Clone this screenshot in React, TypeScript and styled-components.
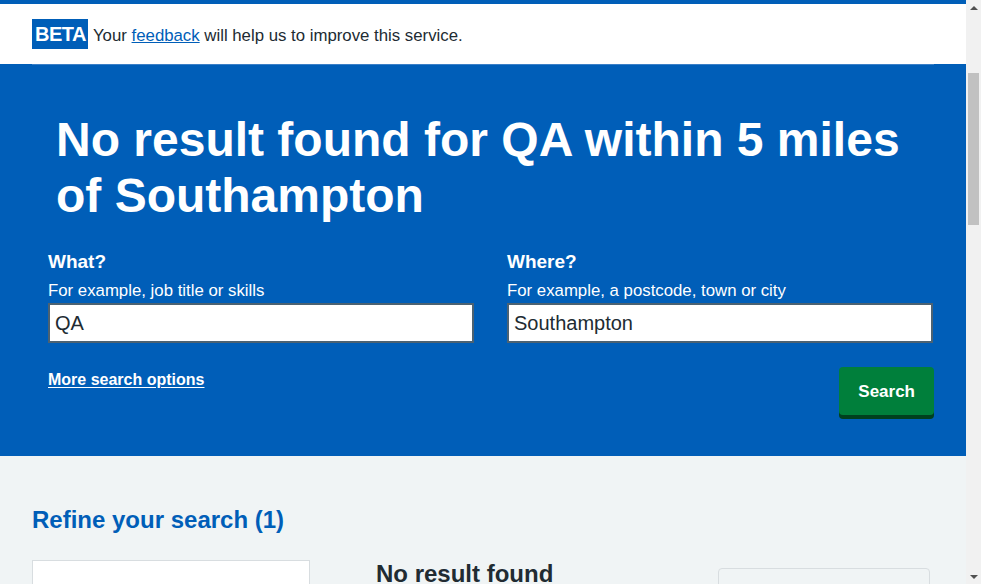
import styled, { createGlobalStyle } from 'styled-components'

const GlobalStyle = createGlobalStyle`
	html, body {
		margin: 0;
		padding: 0;
		height: 100%;
		overflow: hidden;
	}
	body {
		font-family: 'Liberation Sans', Arial, sans-serif;
		color: #212b32;
		background: #f0f4f5;
	}
	* {
		box-sizing: border-box;
	}
`

const Frame = styled.div`
	display: flex;
	height: 100vh;
`

const Page = styled.div`
	flex: 1;
	min-width: 0;
	overflow: hidden;
	border-top: 4px solid #005eb8;
`

const Banner = styled.div`
	display: flex;
	align-items: center;
	height: 60px;
	padding: 0 32px;
	background: #ffffff;
	gap: 5px;
`

const BetaTag = styled.strong`
	display: inline-block;
	height: 30px;
	padding: 0 2px 0 3px;
	background: #005eb8;
	color: #ffffff;
	font-size: 20px;
	line-height: 31px;
	letter-spacing: -0.5px;
`

const BannerText = styled.p`
	margin: 3px 0 0;
	font-size: 16.8px;
	line-height: 24px;
	color: #212b32;

	& a {
		color: #005eb8;
		text-decoration: underline;
	}
`

const Hero = styled.section`
	background: #005eb8;
	padding-bottom: 41px;
`

const HeroInner = styled.div`
	margin: 0 32px;
	border-top: 1px solid #3a7fc7;
	padding-top: 47px;
`

const Heading = styled.h1`
	margin: 0 0 26px;
	padding: 0 24px;
	font-size: 48px;
	line-height: 56px;
	font-weight: 700;
	color: #ffffff;
`

const SearchForm = styled.form`
	padding-left: 16px;
`

const Fields = styled.div`
	display: grid;
	grid-template-columns: 426px 426px;
	column-gap: 33px;
`

const Field = styled.div`
	display: flex;
	flex-direction: column;
`

const Label = styled.label`
	font-size: 19px;
	line-height: 24px;
	font-weight: 700;
	color: #ffffff;
	margin-bottom: 5px;
`

const Hint = styled.span`
	font-size: 16.8px;
	line-height: 24px;
	color: #ffffff;
`

const TextInput = styled.input`
	height: 40px;
	width: 100%;
	border: 2px solid #4c6272;
	padding: 0 5px;
	background: #ffffff;
	font-family: 'Liberation Sans', Arial, sans-serif;
	font-size: 20px;
	color: #212b32;
	outline: none;
`

const Actions = styled.div`
	display: flex;
	justify-content: space-between;
	align-items: flex-start;
	margin-top: 24px;
`

const MoreLink = styled.a`
	padding-top: 1px;
	font-size: 16px;
	line-height: 24px;
	font-weight: 700;
	color: #ffffff;
	text-decoration: underline;
	text-underline-offset: 2px;
`

const SearchButton = styled.button`
	height: 48px;
	padding: 0 19px;
	border: 0;
	border-radius: 4px;
	background: #007f3b;
	box-shadow: 0 4px 0 #00401e;
	color: #ffffff;
	font-family: 'Liberation Sans', Arial, sans-serif;
	font-size: 17px;
	font-weight: 700;
	line-height: 50px;
	cursor: pointer;
`

const Main = styled.main`
	padding: 48px 32px 0;
`

const RefineTitle = styled.h2`
	margin: 0 0 24px;
	font-size: 24px;
	line-height: 32px;
	font-weight: 700;
	color: #005eb8;
`

const Columns = styled.div`
	display: flex;
	align-items: flex-start;
`

const FilterPanel = styled.div`
	width: 278px;
	height: 240px;
	background: #ffffff;
	border: 1px solid #d8dde0;
`

const Results = styled.div`
	width: 342px;
	margin-left: 66px;
`

const ResultsTitle = styled.h2`
	margin: 0;
	font-size: 24px;
	line-height: 28px;
	font-weight: 700;
	color: #212b32;
`

const SideBox = styled.div`
	width: 212px;
	margin-top: 8px;
	padding: 18px 16px 16px 25px;
	border: 1px solid #d8dde0;
	border-radius: 4px;
	background: #f0f4f5;
`

const SideLink = styled.a`
	font-size: 16px;
	line-height: 24px;
	color: #005eb8;
	text-decoration: underline;
`

const Scrollbar = styled.div`
	display: flex;
	flex-direction: column;
	width: 15px;
	height: 100vh;
	background: #f1f1f1;
`

const ScrollArrow = styled.div<{ $down?: boolean }>`
	display: flex;
	align-items: center;
	justify-content: center;
	height: 15px;

	&::before {
		content: '';
		width: 0;
		height: 0;
		border-left: 4px solid transparent;
		border-right: 4px solid transparent;
		${(props) =>
			props.$down ? 'border-top: 4px solid #505050;' : 'border-bottom: 4px solid #505050;'}
	}
`

const ScrollTrack = styled.div`
	flex: 1;
	padding: 58px 2px 0;
`

const ScrollThumb = styled.div`
	height: 152px;
	background: #c1c1c1;
`

const App = () => {
	return (
		<>
			<GlobalStyle />
			<Frame>
				<Page>
					<Banner>
						<BetaTag>BETA</BetaTag>
						<BannerText>
							Your <a href="#">feedback</a> will help us to improve this service.
						</BannerText>
					</Banner>

					<Hero>
						<HeroInner>
							<Heading>No result found for QA within 5 miles of Southampton</Heading>

							<SearchForm onSubmit={(e) => e.preventDefault()}>
								<Fields>
									<Field>
										<Label htmlFor="what">What?</Label>
										<Hint>For example, job title or skills</Hint>
										<TextInput id="what" defaultValue="QA" />
									</Field>
									<Field>
										<Label htmlFor="where">Where?</Label>
										<Hint>For example, a postcode, town or city</Hint>
										<TextInput id="where" defaultValue="Southampton" />
									</Field>
								</Fields>

								<Actions>
									<MoreLink href="#">More search options</MoreLink>
									<SearchButton type="submit">Search</SearchButton>
								</Actions>
							</SearchForm>
						</HeroInner>
					</Hero>

					<Main>
						<RefineTitle>Refine your search (1)</RefineTitle>
						<Columns>
							<FilterPanel />
							<Results>
								<ResultsTitle>No result found</ResultsTitle>
							</Results>
							<SideBox>
								<SideLink href="#">Set up an email alert</SideLink>
							</SideBox>
						</Columns>
					</Main>
				</Page>

				<Scrollbar>
					<ScrollArrow />
					<ScrollTrack>
						<ScrollThumb />
					</ScrollTrack>
					<ScrollArrow $down />
				</Scrollbar>
			</Frame>
		</>
	)
}

export default App
